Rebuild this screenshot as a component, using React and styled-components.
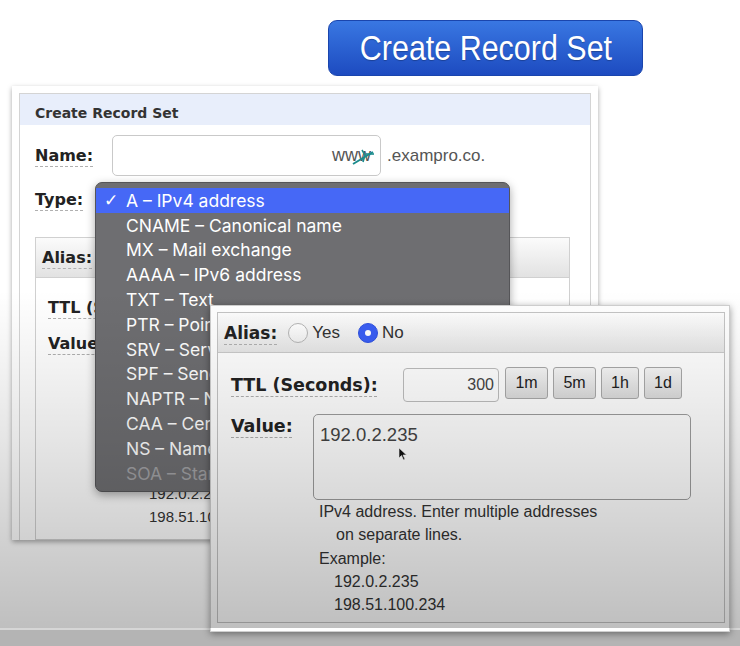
import styled, { createGlobalStyle } from 'styled-components';

const GlobalStyle = createGlobalStyle`
  html, body {
    margin: 0;
    padding: 0;
    background: #ffffff;
  }
  body {
    font-family: "Liberation Sans", Arial, sans-serif;
    color: #333;
  }
`;

const RECORD_TYPES = [
  'A – IPv4 address',
  'CNAME – Canonical name',
  'MX – Mail exchange',
  'AAAA – IPv6 address',
  'TXT – Text',
  'PTR – Pointer',
  'SRV – Service locator',
  'SPF – Sender Policy Framework',
  'NAPTR – Name Authority Pointer',
  'CAA – Certification Authority Authorization',
  'NS – Name server',
  'SOA – Start of authority',
];

const TTL_PRESETS = ['1m', '5m', '1h', '1d'];

function TealCursor() {
  return (
    <CursorMark width="24" height="20" viewBox="0 0 24 20">
      <path d="M2 18 L22 6" stroke="#1b8c8c" strokeWidth="2" fill="none" />
      <path d="M11 4 L14 9 L12 16" stroke="#1b8c8c" strokeWidth="1.6" fill="none" />
      <path d="M15 8 L23 8" stroke="#1b8c8c" strokeWidth="1.6" fill="none" />
    </CursorMark>
  );
}

function Pointer() {
  return (
    <PointerMark width="10" height="14" viewBox="0 0 10 14">
      <path d="M1 1 L1 11 L3.5 8.5 L5.5 13 L7 12.3 L5 8 L8.5 8 Z" fill="#111" stroke="#fff" strokeWidth="0.6" />
    </PointerMark>
  );
}

export default function App() {
  return (
    <>
      <GlobalStyle />
      <Stage>
        <ButtonRow>
          <PrimaryButton>
            <ButtonText>Create Record Set</ButtonText>
          </PrimaryButton>
        </ButtonRow>

        <BackPanel>
          <Frame>
            <FrameHeader>Create Record Set</FrameHeader>
            <NameRow>
              <Label $width={77}>Name:</Label>
              <NameInput>
                www
                <TealCursor />
              </NameInput>
              <Suffix>.exampro.co.</Suffix>
            </NameRow>
            <TypeRow>
              <Label>Type:</Label>
            </TypeRow>
            <AliasBox>
              <AliasHeader>
                <Label>Alias:</Label>
              </AliasHeader>
              <AliasBody>
                <BackRow>
                  <Label>TTL (Seconds):</Label>
                </BackRow>
                <BackRow $gap={12}>
                  <Label>Value:</Label>
                </BackRow>
                <GhostHelp>
                  <div>192.0.2.235</div>
                  <div>198.51.100.234</div>
                </GhostHelp>
              </AliasBody>
            </AliasBox>
          </Frame>
        </BackPanel>

        <Menu>
          {RECORD_TYPES.map((type, i) => (
            <MenuItem key={type} $selected={i === 0} $disabled={i === RECORD_TYPES.length - 1}>
              {i === 0 && <Check>✓</Check>}
              {type}
            </MenuItem>
          ))}
        </Menu>

        <FrontPanel>
          <FrontFrame>
            <FrontHeader>
              <Label $size={17}>Alias:</Label>
              <RadioGroup>
                <Radio />
                <RadioText>Yes</RadioText>
              </RadioGroup>
              <RadioGroup>
                <Radio $checked />
                <RadioText>No</RadioText>
              </RadioGroup>
            </FrontHeader>
            <FrontBody>
              <TtlRow>
                <LabelCell $width={172}>
                  <Label $size={17.5}>TTL (Seconds):</Label>
                </LabelCell>
                <TtlInput>300</TtlInput>
                <Presets>
                  {TTL_PRESETS.map((p) => (
                    <PresetButton key={p} $wide={p.endsWith('m')}>{p}</PresetButton>
                  ))}
                </Presets>
              </TtlRow>
              <ValueRow>
                <LabelCell $width={82}>
                  <Label $size={17.5}>Value:</Label>
                </LabelCell>
                <ValueBox>
                  192.0.2.235
                  <Pointer />
                </ValueBox>
              </ValueRow>
              <Help>
                <HelpLine>IPv4 address. Enter multiple addresses</HelpLine>
                <HelpLine $indent={17}>on separate lines.</HelpLine>
                <HelpLine>Example:</HelpLine>
                <HelpLine $indent={15}>192.0.2.235</HelpLine>
                <HelpLine $indent={15}>198.51.100.234</HelpLine>
              </Help>
            </FrontBody>
          </FrontFrame>
        </FrontPanel>

        <Shade />
      </Stage>
      <Footer />
    </>
  );
}

const Stage = styled.div`
  position: relative;
  width: 740px;
  height: 628px;
`;

const Shade = styled.div`
  position: absolute;
  inset: 0;
  z-index: 10;
  pointer-events: none;
  background: linear-gradient(
    to bottom,
    rgba(0, 0, 0, 0) 0px,
    rgba(0, 0, 0, 0) 290px,
    rgba(0, 0, 0, 0.1) 440px,
    rgba(0, 0, 0, 0.25) 628px
  );
`;

const Footer = styled.div`
  position: relative;
  z-index: 0;
  height: 16px;
  background: #b4b4b4;
  border-top: 2px solid #d6d6d6;
`;

const ButtonRow = styled.div`
  display: flex;
  padding: 20px 0 0 328px;
`;

const PrimaryButton = styled.button`
  width: 315px;
  height: 56px;
  border: 1px solid #1a45ad;
  border-radius: 9px;
  background: linear-gradient(to bottom, #3977e2, #1d4bc0);
  color: #fff;
  padding: 0;
  display: flex;
  align-items: center;
  justify-content: center;
  overflow: hidden;
`;

const ButtonText = styled.span`
  display: inline-block;
  font-family: "Liberation Sans", Arial, sans-serif;
  font-size: 35px;
  white-space: nowrap;
  transform: scaleX(0.87);
  text-shadow: 0 1px 1px rgba(0, 0, 0, 0.25);
`;

const BackPanel = styled.div`
  margin: 10px 0 0 12px;
  width: 586px;
  height: 454px;
  box-sizing: border-box;
  padding: 7px 7px 0 7px;
  background: #fff;
  box-shadow: 0 2px 5px rgba(0, 0, 0, 0.35);
  display: flex;
`;

const Frame = styled.div`
  flex: 1;
  border: 1px solid #d4d4d4;
  border-bottom: none;
  display: flex;
  flex-direction: column;
`;

const FrameHeader = styled.div`
  height: 31px;
  box-sizing: border-box;
  display: flex;
  align-items: center;
  padding: 6px 0 0 15px;
  background: #e8eefb;
  font-family: "DejaVu Sans", Verdana, sans-serif;
  font-weight: bold;
  font-size: 14px;
  color: #333;
`;

const Label = styled.span`
  display: inline-block;
  flex: none;
  width: ${(p) => (p.$width ? `${p.$width}px` : 'auto')};
  font-family: "DejaVu Sans", Verdana, sans-serif;
  font-weight: bold;
  font-size: ${(p) => p.$size || 16}px;
  line-height: 24px;
  color: #222;
  text-decoration: underline dashed #b0b0b0 1px;
  text-underline-offset: 5px;
`;

const LabelCell = styled.div`
  flex: none;
  width: ${(p) => p.$width}px;
`;

const NameRow = styled.div`
  display: flex;
  align-items: center;
  margin-top: 10px;
  padding-left: 15px;
`;

const NameInput = styled.div`
  position: relative;
  width: 269px;
  height: 41px;
  box-sizing: border-box;
  border: 1px solid #c9c9c9;
  border-radius: 5px;
  display: flex;
  align-items: center;
  justify-content: flex-end;
  padding-right: 9px;
  font-size: 18px;
  color: #555;
`;

const CursorMark = styled.svg`
  position: absolute;
  right: 5px;
  top: 10px;
`;

const Suffix = styled.span`
  margin-left: 6px;
  font-size: 17px;
  color: #555;
`;

const TypeRow = styled.div`
  display: flex;
  align-items: center;
  height: 30px;
  margin-top: 9px;
  padding-left: 15px;
`;

const AliasBox = styled.div`
  flex: 1;
  margin: 22px 20px 0 15px;
  border: 1px solid #d0d0d0;
  display: flex;
  flex-direction: column;
`;

const AliasHeader = styled.div`
  height: 39px;
  display: flex;
  align-items: center;
  padding-left: 6px;
  background: linear-gradient(to bottom, #fbfbfb, #e2e2e2);
  border-bottom: 1px solid #d0d0d0;
`;

const AliasBody = styled.div`
  display: flex;
  flex-direction: column;
  padding: 18px 0 0 12px;
`;

const BackRow = styled.div`
  display: flex;
  margin-top: ${(p) => p.$gap || 0}px;
`;

const GhostHelp = styled.div`
  margin: 126px 0 0 101px;
  font-size: 15px;
  line-height: 23px;
  color: #333;
`;

const Menu = styled.div`
  position: absolute;
  z-index: 2;
  left: 95px;
  top: 182px;
  width: 415px;
  height: 310px;
  box-sizing: border-box;
  padding-top: 5px;
  background: #6e6e71;
  border: 1px solid #555558;
  border-radius: 7px;
  box-shadow: 0 3px 10px rgba(0, 0, 0, 0.35);
  overflow: hidden;
`;

const MenuItem = styled.div`
  position: relative;
  height: 24.8px;
  display: flex;
  align-items: center;
  padding-left: 30px;
  white-space: nowrap;
  font-family: Inter, "Open Sans", sans-serif;
  font-size: 17.5px;
  color: ${(p) => (p.$disabled ? '#a2a2a5' : '#ffffff')};
  background: ${(p) => (p.$selected ? '#4668f6' : 'transparent')};
`;

const Check = styled.span`
  position: absolute;
  left: 8px;
  font-family: "DejaVu Sans", sans-serif;
  font-size: 17px;
`;

const FrontPanel = styled.div`
  position: absolute;
  z-index: 3;
  left: 210px;
  top: 305px;
  width: 520px;
  height: 327px;
  box-sizing: border-box;
  padding: 6px 4px 8px 6px;
  background: #fff;
  border: 1px solid #cfcfcf;
  box-shadow: 0 2px 7px rgba(0, 0, 0, 0.4);
  display: flex;
`;

const FrontFrame = styled.div`
  flex: 1;
  border: 1px solid #c4c4c4;
  display: flex;
  flex-direction: column;
`;

const FrontHeader = styled.div`
  height: 39px;
  display: flex;
  align-items: center;
  padding-left: 6px;
  background: linear-gradient(to bottom, #fdfdfd, #e6e6e6);
  border-bottom: 1px solid #cacaca;
`;

const RadioGroup = styled.label`
  display: flex;
  align-items: center;
  margin-left: 11px;
  & + & {
    margin-left: 18px;
  }
`;

const Radio = styled.span`
  width: 20px;
  height: 20px;
  box-sizing: border-box;
  border-radius: 50%;
  border: 1px solid ${(p) => (p.$checked ? '#2f52e0' : '#b5b5b5')};
  background: ${(p) => (p.$checked ? '#3a5ef4' : 'linear-gradient(#ffffff, #f0f0f0)')};
  display: flex;
  align-items: center;
  justify-content: center;
  &::after {
    content: '';
    display: ${(p) => (p.$checked ? 'block' : 'none')};
    width: 6px;
    height: 6px;
    border-radius: 50%;
    background: #fff;
  }
`;

const RadioText = styled.span`
  margin-left: 4px;
  font-size: 17px;
  color: #333;
`;

const FrontBody = styled.div`
  display: flex;
  flex-direction: column;
  padding: 14px 0 0 13px;
`;

const TtlRow = styled.div`
  display: flex;
  align-items: flex-start;
  & > ${LabelCell} {
    margin-top: 6px;
  }
`;

const TtlInput = styled.div`
  width: 96px;
  height: 34px;
  margin-top: 1px;
  box-sizing: border-box;
  border: 1px solid #bdbdbd;
  border-radius: 4px;
  background: #fff;
  display: flex;
  align-items: center;
  justify-content: flex-end;
  padding-right: 4px;
  font-size: 16px;
  color: #444;
`;

const Presets = styled.div`
  display: flex;
  gap: 5px;
  margin-left: 6px;
`;

const PresetButton = styled.button`
  width: ${(p) => (p.$wide ? 43 : 38)}px;
  height: 32px;
  padding: 0;
  border: 1px solid #a9a9a9;
  border-radius: 3px;
  background: linear-gradient(to bottom, #f7f7f7, #dcdcdc);
  font-family: "Liberation Sans", Arial, sans-serif;
  font-size: 16px;
  color: #222;
`;

const ValueRow = styled.div`
  display: flex;
  align-items: flex-start;
  margin-top: 12px;
`;

const ValueBox = styled.div`
  position: relative;
  width: 378px;
  height: 86px;
  box-sizing: border-box;
  border: 1px solid #9d9d9d;
  border-radius: 5px;
  background: #fff;
  padding: 8px 6px;
  font-size: 18.5px;
  line-height: 24px;
  color: #444;
`;

const PointerMark = styled.svg`
  position: absolute;
  left: 84px;
  top: 32px;
`;

const Help = styled.div`
  margin: 0 0 0 88px;
  font-size: 16px;
  line-height: 23.3px;
  color: #333;
`;

const HelpLine = styled.div`
  padding-left: ${(p) => p.$indent || 0}px;
`;
